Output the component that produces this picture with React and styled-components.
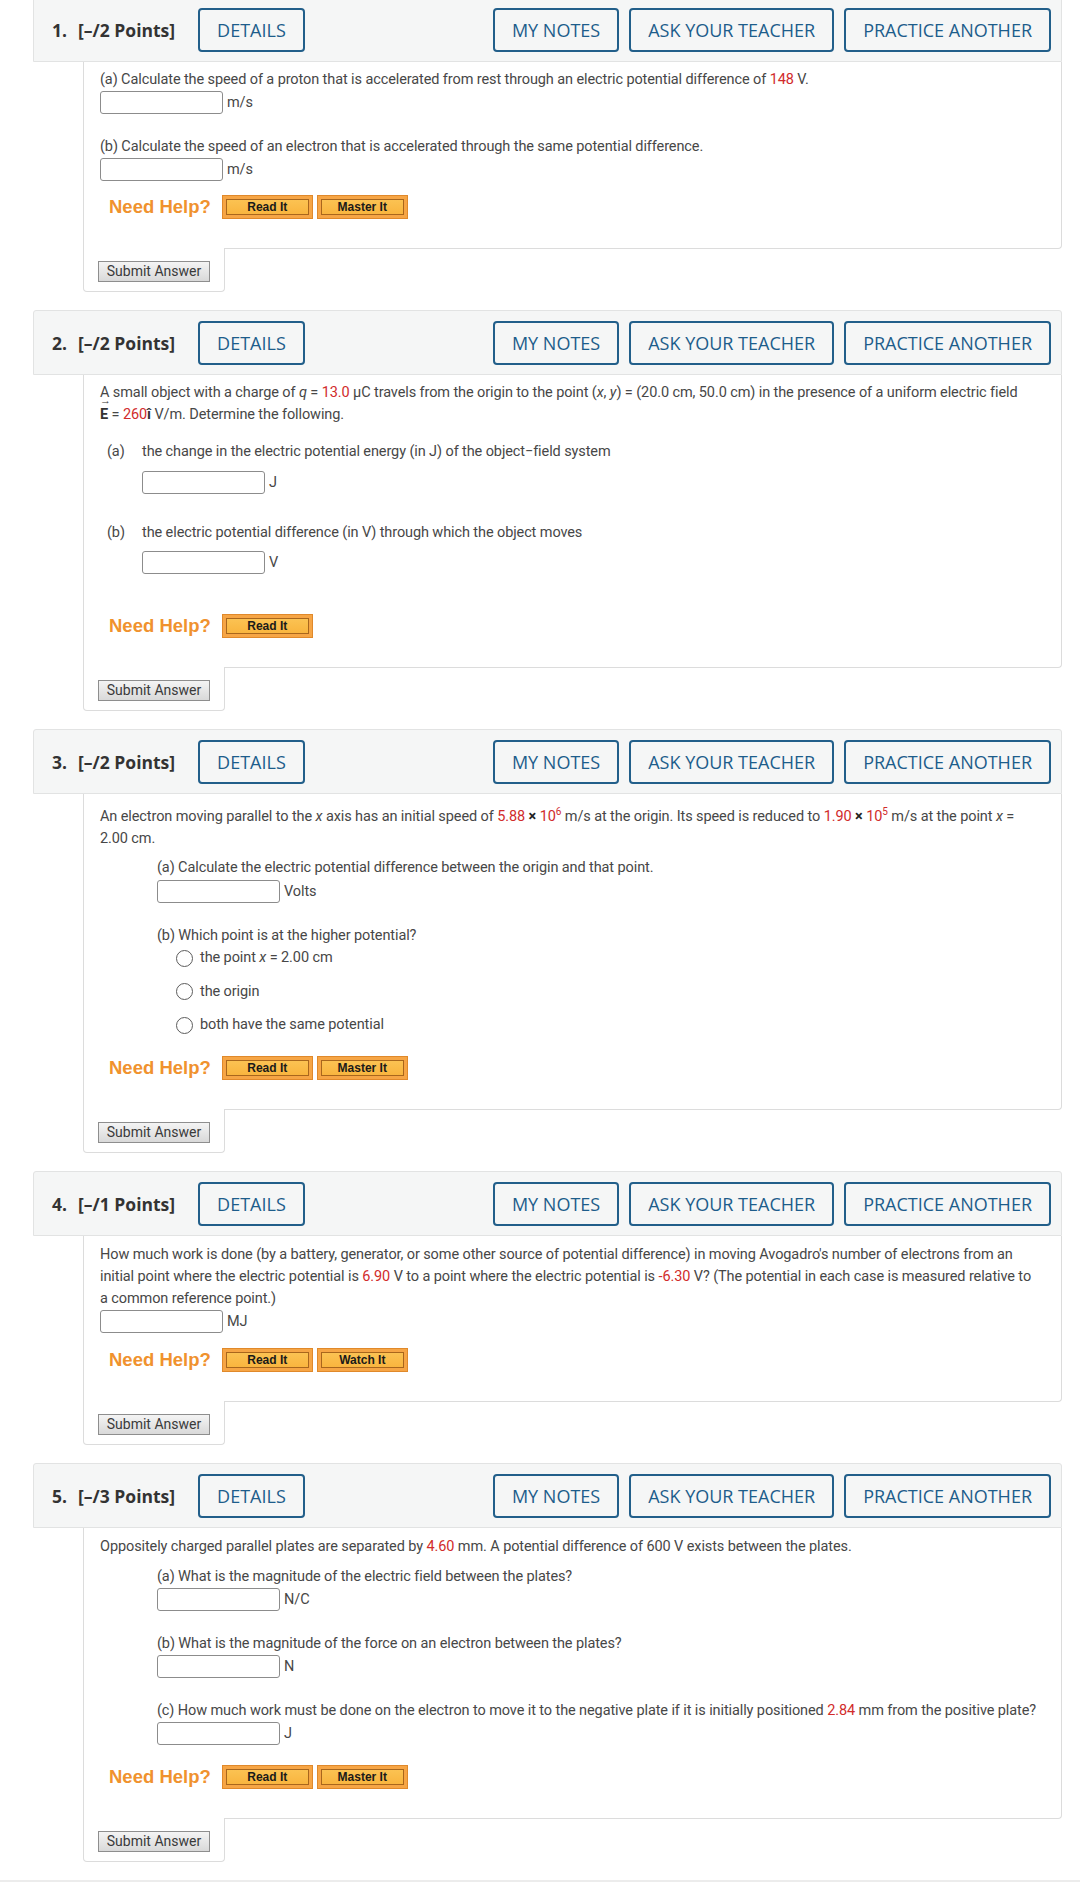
import React from "react";
import styled, { createGlobalStyle } from "styled-components";

const GlobalStyle = createGlobalStyle`
  html, body {
    margin: 0;
    padding: 0;
    background: #fff;
  }
  body {
    font-family: Roboto, "Liberation Sans", sans-serif;
  }
`;

const Page = styled.div`
  padding: 0 18px 0 33px;
  margin-top: -3px;
`;

const Card = styled.section`
  margin-bottom: 18px;
`;

const Header = styled.div`
  display: flex;
  align-items: center;
  height: 65px;
  box-sizing: border-box;
  padding: 0 10px 0 18px;
  background: #f5f6f6;
  border: 1px solid #e2e3e3;
  border-radius: 3px 3px 0 0;
  font-family: "Open Sans", "Liberation Sans", sans-serif;
`;

const QNum = styled.span`
  width: 26px;
  font-size: 17.5px;
  font-weight: 700;
  color: #333;
`;

const Points = styled.span`
  margin-right: 23px;
  font-size: 17.5px;
  font-weight: 700;
  color: #333;
`;

const HeaderButton = styled.button`
  height: 44px;
  box-sizing: border-box;
  padding: 0 17px;
  margin-left: ${(p) => (p.$push ? "auto" : p.$first ? "0" : "10px")};
  border: 2px solid #225f8a;
  border-radius: 4px;
  background: transparent;
  color: #1d5d8b;
  font-family: "Open Sans", "Liberation Sans", sans-serif;
  font-size: 18px;
  font-weight: 500;
  white-space: nowrap;
`;

const Body = styled.div`
  margin-left: 50px;
  padding: ${(p) => p.$top}px 16px 29px 16px;
  border: 1px solid #dcdcdc;
  border-top: none;
  border-radius: 0 0 4px 0;
  font-family: Roboto, "Liberation Sans", sans-serif;
  font-size: 14.5px;
  letter-spacing: -0.1px;
  line-height: 22px;
  color: #474747;
`;

const Para = styled.p`
  margin: 0;
`;

const Line = styled.div`
  margin-top: ${(p) => p.$mt || 0}px;
`;

const Val = styled.span`
  color: #d12b2b;
`;

const Times = styled.span`
  color: #222;
  font-weight: 700;
`;

const Sup = styled.sup`
  font-size: 10px;
  line-height: 0;
  vertical-align: 6px;
`;

const Vec = styled.span`
  position: relative;
  font-weight: 700;
  color: #333;
`;

const VecArrow = styled.span`
  position: absolute;
  left: 0;
  top: -11px;
  font-size: 11px;
  font-weight: 400;
  line-height: 1;
`;

const Hat = styled.span`
  font-weight: 700;
  color: #333;
`;

const NoWrap = styled.span`
  white-space: nowrap;
`;

const Indent = styled.div`
  margin-top: ${(p) => p.$mt || 0}px;
  padding-left: 57px;
`;

const PartRow = styled.div`
  display: flex;
  margin-top: ${(p) => p.$mt || 0}px;
  padding-left: 7px;
`;

const PartLabel = styled.span`
  width: 35px;
  flex-shrink: 0;
`;

const AnswerRow = styled.div`
  display: flex;
  align-items: center;
  height: 23px;
  margin-top: ${(p) => p.$mt || 0}px;
  padding-left: ${(p) => p.$indent || 0}px;
`;

const AnswerBox = styled.input`
  width: 123px;
  height: 23px;
  box-sizing: border-box;
  margin: 0;
  padding: 0 4px;
  border: 1px solid #8c8c8c;
  border-radius: 3px;
  background: #fff;
`;

const Unit = styled.span`
  margin-left: 4px;
`;

const RadioList = styled.div`
  display: flex;
  flex-direction: column;
  gap: 11.5px;
`;

const RadioRow = styled.label`
  display: flex;
  align-items: center;
  height: 22px;
  padding-left: 19px;
`;

const RadioCircle = styled.span`
  width: 17px;
  height: 17px;
  box-sizing: border-box;
  margin-right: 7px;
  border: 1.5px solid #5c5c5c;
  border-radius: 50%;
  background: #fff;
`;

const HelpRow = styled.div`
  display: flex;
  align-items: center;
  gap: 4px;
  height: 24px;
  margin-top: ${(p) => p.$mt}px;
  padding-left: 9px;
  letter-spacing: 0;
`;

const NeedHelp = styled.span`
  margin-right: 7px;
  font-family: "Liberation Sans", Arial, sans-serif;
  font-size: 18.5px;
  font-weight: 700;
  color: #f0922e;
`;

const HelpButton = styled.button`
  width: 91px;
  height: 24px;
  box-sizing: border-box;
  padding: 0;
  border: 1px solid #e0892b;
  box-shadow: inset 0 0 0 3px #f6a545, inset 0 0 0 4px #a9661c;
  background: linear-gradient(#fcc658, #f8b139);
  font-family: "Liberation Sans", Arial, sans-serif;
  font-size: 12px;
  font-weight: 700;
  line-height: 22px;
  color: #1a1a1a;
`;

const SubmitTab = styled.div`
  width: 142px;
  box-sizing: border-box;
  margin: -1px 0 0 50px;
  padding: 13px 0 9px 14px;
  border: 1px solid #dcdcdc;
  border-top: none;
  border-radius: 0 0 4px 4px;
  background: #fff;
`;

const SubmitButton = styled.button`
  display: block;
  width: 112px;
  height: 21px;
  box-sizing: border-box;
  padding: 0;
  border: 1px solid #8e8e8e;
  background: linear-gradient(#f4f4f4, #d9d9d9);
  font-family: Roboto, "Liberation Sans", sans-serif;
  font-size: 14px;
  line-height: 19px;
  color: #3a3a3a;
`;

const BottomBand = styled.div`
  height: 40px;
  margin-top: 6px;
  background: #ececec;
`;

const Answer = ({ unit, mt, indent }) => (
  <AnswerRow $mt={mt} $indent={indent}>
    <AnswerBox type="text" />
    <Unit>{unit}</Unit>
  </AnswerRow>
);

const Help = ({ mt, second }) => (
  <HelpRow $mt={mt}>
    <NeedHelp>Need Help?</NeedHelp>
    <HelpButton>Read It</HelpButton>
    {second && <HelpButton>{second}</HelpButton>}
  </HelpRow>
);

const Question = ({ num, points, top, children }) => (
  <Card>
    <Header>
      <QNum>{num}.</QNum>
      <Points>[–/{points} Points]</Points>
      <HeaderButton $first>DETAILS</HeaderButton>
      <HeaderButton $push>MY NOTES</HeaderButton>
      <HeaderButton>ASK YOUR TEACHER</HeaderButton>
      <HeaderButton>PRACTICE ANOTHER</HeaderButton>
    </Header>
    <Body $top={top}>{children}</Body>
    <SubmitTab>
      <SubmitButton>Submit Answer</SubmitButton>
    </SubmitTab>
  </Card>
);

export default function App() {
  return (
    <>
      <GlobalStyle />
      <Page>
        <Question num={1} points={2} top={7}>
          <Line>
            (a) Calculate the speed of a proton that is accelerated from rest through an electric
            potential difference of <Val>148</Val> V.
          </Line>
          <Answer unit="m/s" />
          <Line $mt={22}>
            (b) Calculate the speed of an electron that is accelerated through the same potential
            difference.
          </Line>
          <Answer unit="m/s" />
          <Help mt={14} second="Master It" />
        </Question>

        <Question num={2} points={2} top={7}>
          <Para>
            A small object with a charge of <i>q</i> = <Val>13.0</Val> µC travels from the origin
            to the point (<i>x</i>, <i>y</i>) = (20.0 cm, 50.0 cm) in the presence of a uniform
            electric field{" "}
            <NoWrap>
              <Vec>
                E<VecArrow>→</VecArrow>
              </Vec>{" "}
              = <Val>260</Val>
              <Hat>î</Hat>
            </NoWrap>{" "}
            V/m. Determine the following.
          </Para>
          <PartRow $mt={15}>
            <PartLabel>(a)</PartLabel>
            <span>the change in the electric potential energy (in J) of the object−field system</span>
          </PartRow>
          <Answer unit="J" mt={8} indent={42} />
          <PartRow $mt={28}>
            <PartLabel>(b)</PartLabel>
            <span>the electric potential difference (in V) through which the object moves</span>
          </PartRow>
          <Answer unit="V" mt={7} indent={42} />
          <Help mt={40} />
        </Question>

        <Question num={3} points={2} top={12}>
          <Para>
            An electron moving parallel to the <i>x</i> axis has an initial speed of{" "}
            <Val>5.88</Val> <Times>×</Times>{" "}
            <Val>
              10<Sup>6</Sup>
            </Val>{" "}
            m/s at the origin. Its speed is reduced to <Val>1.90</Val> <Times>×</Times>{" "}
            <Val>
              10<Sup>5</Sup>
            </Val>{" "}
            m/s at the point <i>x</i> = 2.00 cm.
          </Para>
          <Indent $mt={7}>
            <Line>(a) Calculate the electric potential difference between the origin and that point.</Line>
            <Answer unit="Volts" mt={1} />
            <Line $mt={22}>(b) Which point is at the higher potential?</Line>
            <RadioList>
              <RadioRow>
                <RadioCircle />
                <span>
                  the point <i>x</i> = 2.00 cm
                </span>
              </RadioRow>
              <RadioRow>
                <RadioCircle />
                <span>the origin</span>
              </RadioRow>
              <RadioRow>
                <RadioCircle />
                <span>both have the same potential</span>
              </RadioRow>
            </RadioList>
          </Indent>
          <Help mt={20} second="Master It" />
        </Question>

        <Question num={4} points={1} top={8}>
          <Para>
            How much work is done (by a battery, generator, or some other source of potential
            difference) in moving Avogadro's number of electrons from an initial point where the
            electric potential is <Val>6.90</Val> V to a point where the electric potential is{" "}
            <Val>-6.30</Val> V? (The potential in each case is measured relative to
            <br />a common reference point.)
          </Para>
          <Answer unit="MJ" />
          <Help mt={15} second="Watch It" />
        </Question>

        <Question num={5} points={3} top={8}>
          <Para>
            Oppositely charged parallel plates are separated by <Val>4.60</Val> mm. A potential
            difference of 600 V exists between the plates.
          </Para>
          <Indent $mt={8}>
            <Line>(a) What is the magnitude of the electric field between the plates?</Line>
            <Answer unit="N/C" />
            <Line $mt={22}>(b) What is the magnitude of the force on an electron between the plates?</Line>
            <Answer unit="N" />
            <Line $mt={22}>
              (c) How much work must be done on the electron to move it to the negative plate if it
              is initially positioned <Val>2.84</Val> mm from the positive plate?
            </Line>
            <Answer unit="J" />
          </Indent>
          <Help mt={20} second="Master It" />
        </Question>
      </Page>
      <BottomBand />
    </>
  );
}
